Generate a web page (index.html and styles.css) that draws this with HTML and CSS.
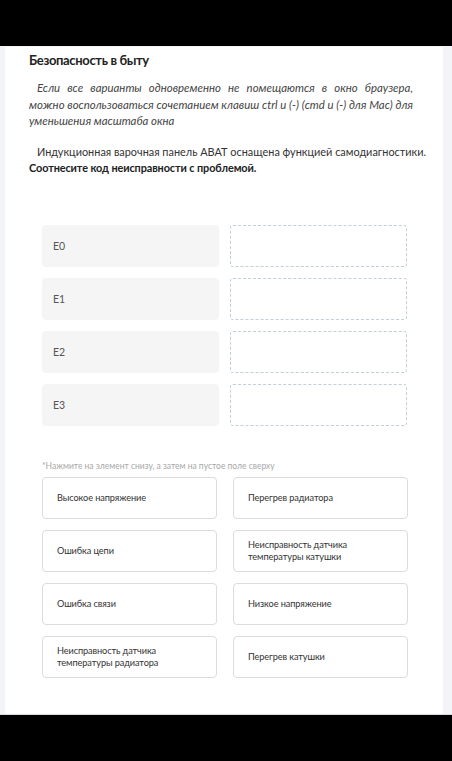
FILE: index.html
```html
<!DOCTYPE html>
<html lang="ru">
<head>
<meta charset="utf-8">
<link rel="stylesheet" href="styles.css">
</head>
<body>
<div class="topbar"></div>
<div class="stage">
  <div class="panel">
    <h1 class="title">Безопасность в быту</h1>
    <p class="note">Если все варианты одновременно не помещаются в окно браузера, можно воспользоваться сочетанием клавиш ctrl и (-) (cmd и (-) для Mac) для уменьшения масштаба окна</p>
    <p class="task">Индукционная варочная панель АВАТ оснащена функцией самодиагностики. <b>Соотнесите код неисправности с проблемой.</b></p>
    <div class="pairs">
      <div class="code">E0</div><div class="slot"></div>
      <div class="code">E1</div><div class="slot"></div>
      <div class="code">E2</div><div class="slot"></div>
      <div class="code">E3</div><div class="slot"></div>
    </div>
    <p class="hint">*Нажмите на элемент снизу, а затем на пустое поле сверху</p>
    <div class="options">
      <div class="opt">Высокое напряжение</div>
      <div class="opt">Перегрев радиатора</div>
      <div class="opt">Ошибка цепи</div>
      <div class="opt">Неисправность датчика температуры катушки</div>
      <div class="opt">Ошибка связи</div>
      <div class="opt">Низкое напряжение</div>
      <div class="opt">Неисправность датчика температуры радиатора</div>
      <div class="opt">Перегрев катушки</div>
    </div>
  </div>
</div>
<div class="bottombar"></div>
</body>
</html>
```
FILE: styles.css
```css
html, body {
  margin: 0;
  padding: 0;
  background: #000;
  font-family: Lato, "Noto Sans", sans-serif;
  color: #333;
}
.topbar { height: 46px; background: #000; }
.bottombar { height: 47px; background: #000; }
.stage {
  background: #f3f4f8;
  padding: 1px 9px 0 5px;
  height: 667px;
  border-bottom: 1px solid #d8d9dd;
}
.panel {
  background: #fff;
  height: 100%;
  padding: 3px 30px 0 24px;
  box-sizing: border-box;
}
.title {
  margin: 0;
  font-size: 13px;
  font-weight: 700;
  letter-spacing: -0.35px;
  color: #222;
  line-height: 20px;
}
.note {
  margin: 10px 0 0;
  font-size: 11.4px;
  font-style: italic;
  line-height: 16.5px;
  text-align: justify;
  text-indent: 8px;
  color: #444;
}
.task {
  margin: 14px -26px 0 0;
  font-size: 10.9px;
  line-height: 16.5px;
  text-indent: 8px;
  color: #333;
}
.task b { color: #222; letter-spacing: -0.1px; }
.pairs {
  display: grid;
  grid-template-columns: 177px 177px;
  column-gap: 11px;
  row-gap: 11px;
  margin: 48px 0 0 13px;
}
.code {
  height: 42px;
  background: #f5f5f6;
  border-radius: 4px;
  display: flex;
  align-items: center;
  padding-left: 11px;
  font-size: 10.5px;
  color: #555;
}
.slot {
  height: 42px;
  box-sizing: border-box;
  border: 1px dashed #bfd0da;
  border-radius: 3px;
}
.hint {
  margin: 34px 0 0 13px;
  font-size: 8.5px;
  color: #a8a8a8;
  line-height: 12px;
}
.options {
  display: grid;
  grid-template-columns: 175px 175px;
  column-gap: 16px;
  row-gap: 11px;
  margin: 5px 0 0 13px;
}
.opt {
  height: 42px;
  box-sizing: border-box;
  border: 1px solid #dcdcdc;
  border-radius: 4px;
  display: flex;
  align-items: center;
  padding: 0 14px;
  font-size: 9.2px;
  letter-spacing: -0.1px;
  line-height: 12px;
  color: #333;
}
```
